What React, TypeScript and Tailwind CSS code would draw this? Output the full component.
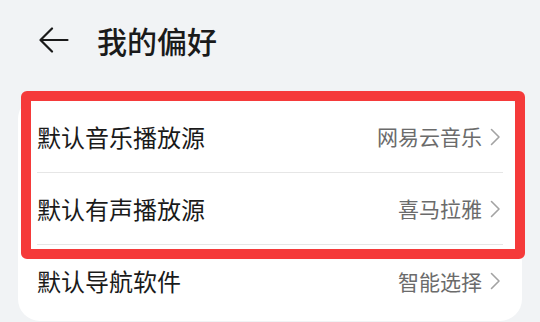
import React from 'react';

interface PrefRow {
  label: string;
  value: string;
}

const rows: PrefRow[] = [
  { label: '默认音乐播放源', value: '网易云音乐' },
  { label: '默认有声播放源', value: '喜马拉雅' },
  { label: '默认导航软件', value: '智能选择' },
];

const Chevron = () => (
  <svg width="11" height="18" viewBox="0 0 11 18" fill="none" className="ml-[8px]">
    <path d="M1.5 1.5 L9 9 L1.5 16.5" stroke="#a3a3a3" strokeWidth="1.6" strokeLinecap="round" strokeLinejoin="round" />
  </svg>
);

export default function App() {
  return (
    <div
      className="relative w-[540px] h-[322px] overflow-hidden bg-[#f1f3f5]"
      style={{ fontFamily: '"Noto Sans CJK SC", "Noto Sans", sans-serif' }}
    >
      {/* Header */}
      <div className="flex items-center h-[80px] pl-[39px]">
        <svg width="30" height="26" viewBox="0 0 30 26" fill="none">
          <path d="M28.5 13 H2 M13 1.5 L1.5 13 L13 24.5" stroke="#1a1a1a" strokeWidth="2.2" strokeLinecap="round" strokeLinejoin="round" />
        </svg>
        <span className="ml-[28px] text-[30px] font-medium text-[#1a1a1a] leading-none">我的偏好</span>
      </div>

      {/* Card */}
      <div className="mx-[18px] mt-[17px] bg-white rounded-[22px] pl-[19px] pr-[19px] py-[4px]">
        {rows.map((row, i) => (
          <div
            key={row.label}
            className={`flex items-center justify-between h-[72px] ${
              i < rows.length - 1 ? 'border-b border-[#e6e6e6]' : ''
            }`}
          >
            <span className="text-[24px] text-[#1a1a1a] leading-none">{row.label}</span>
            <div className="flex items-center pr-[2px]">
              <span className="text-[21px] text-[#6b6b6b] leading-none">{row.value}</span>
              <Chevron />
            </div>
          </div>
        ))}
      </div>

      {/* Highlight box */}
      <div className="absolute left-[21px] top-[91px] w-[504px] h-[168px] border-[10px] border-[#f53a3a] rounded-[6px]" />
    </div>
  );
}
